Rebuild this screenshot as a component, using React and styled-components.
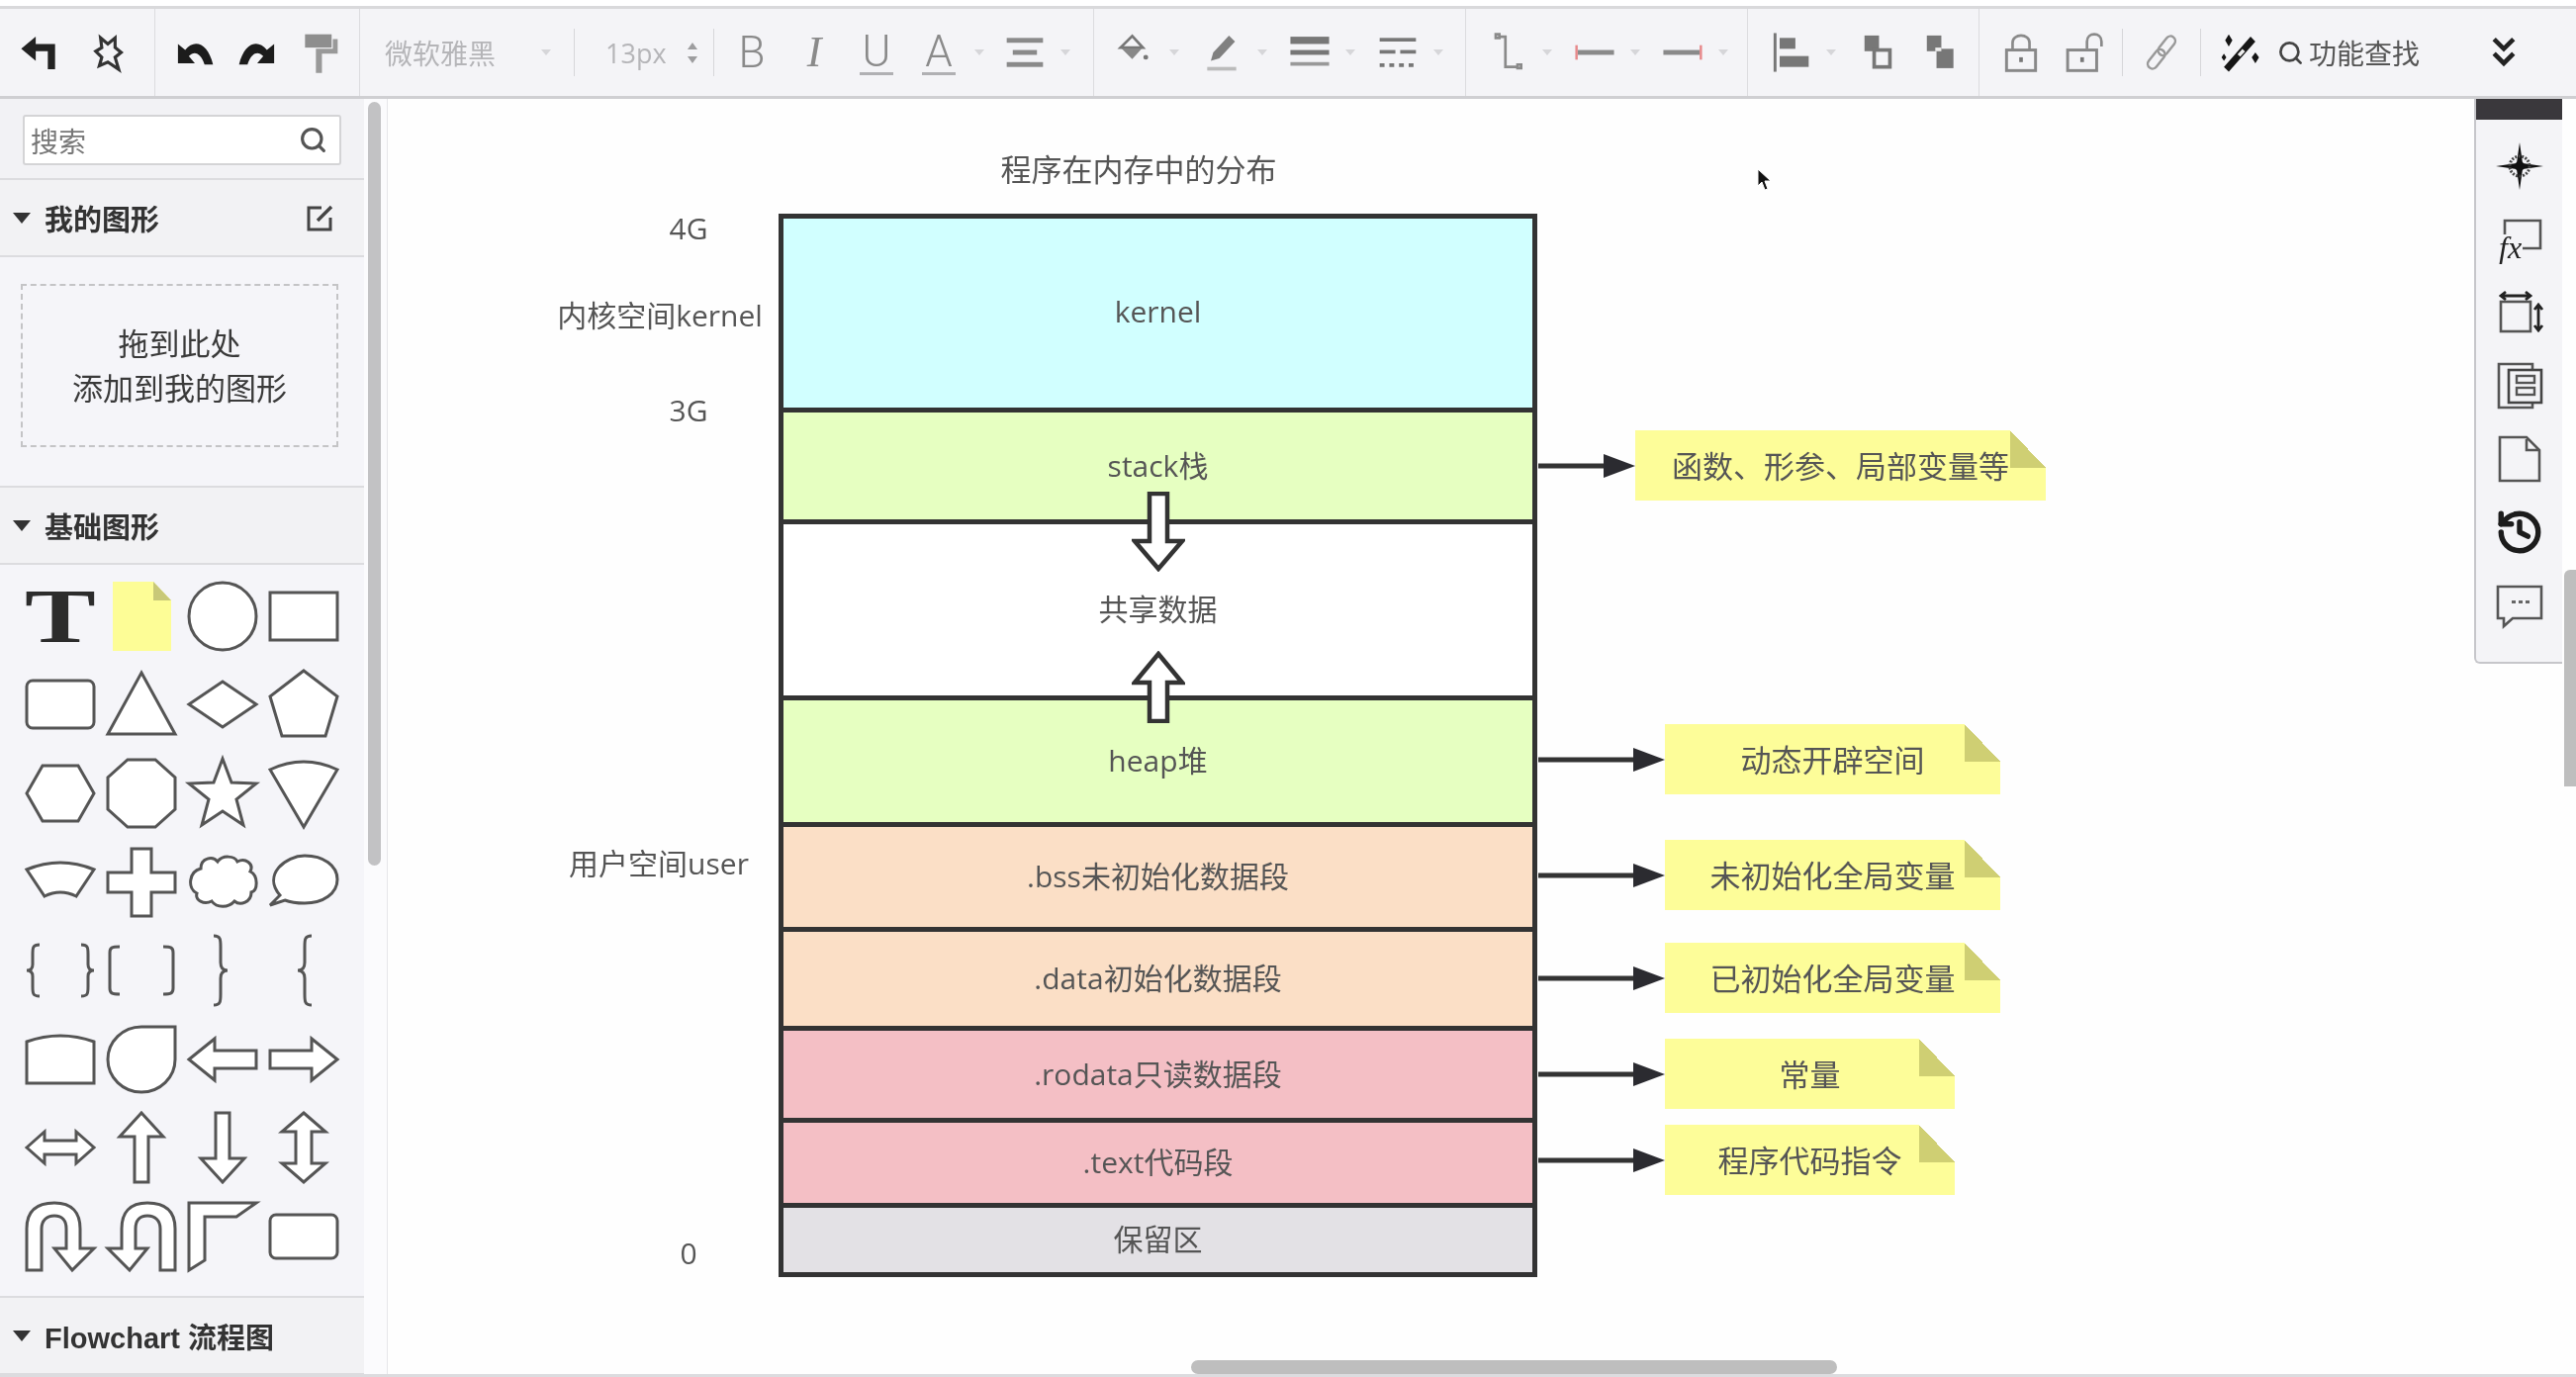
import {History, Search} from 'lucide-react';
import styled, {createGlobalStyle} from 'styled-components';

const FONT = `"Open Sans", "Noto Sans CJK SC", sans-serif`;

const GlobalStyle = createGlobalStyle`
  html, body {
    margin: 0;
    padding: 0;
    background: #fff;
  }
  * {
    box-sizing: border-box;
  }
`;

const Page = styled.div`
  width: 2604px;
  height: 1392px;
  padding-top: 6px;
  overflow: hidden;
  background: #fff;
  color: #555;
  font-family: ${FONT};
  filter: blur(0.7px);
`;

const ToolbarWrap = styled.header`
  display: flex;
  height: 94px;
  background: #f4f4f7;
  border-top: 3px solid #d9d9db;
  border-bottom: 3px solid #cfcfd2;
`;

const ToolGroup = styled.div`
  display: flex;
  flex: none;
  align-items: center;
  gap: ${props => props.$gap}px;
  width: ${props => props.$w}px;
  padding-left: ${props => props.$pad}px;
  border-right: 1px solid #dcdcdf;
`;

const LastGroup = styled.div`
  display: flex;
  flex: 1;
  align-items: center;
  gap: 19px;
  padding-left: 20px;
`;

const ToolSlot = styled.div`
  display: flex;
  flex: none;
  align-items: center;
`;

const ToolIcon = styled.div`
  display: flex;
  width: 44px;
  height: 50px;
  align-items: center;
  justify-content: center;
`;

const Caret = styled.span`
  flex: none;
  width: 0;
  height: 0;
  margin-left: 14px;
  border-left: 5px solid transparent;
  border-right: 5px solid transparent;
  border-top: 6px solid #d6d6d9;
`;

const Letter = styled.span`
  padding: 0 3px;
  color: #8a8a8a;
  font-family: ${props => (props.$italic ? '"Liberation Serif"' : 'Roboto')}, sans-serif;
  font-size: 44px;
  font-style: ${props => (props.$italic ? 'italic' : 'normal')};
  font-weight: 300;
  line-height: 42px;
  border-bottom: ${props => (props.$under ? '3px solid #b0b0b3' : '0')};
`;

const FontSelect = styled.div`
  display: flex;
  flex: none;
  width: 216px;
  align-items: center;
  justify-content: space-between;
  padding: 0 23px 0 25px;
  color: #b5b5b8;
  font-size: 28px;
`;

const Sep = styled.span`
  flex: none;
  width: 1px;
  height: 48px;
  background: #d6d6d9;
`;

const TightSep = styled(Sep)`
  margin: 0 -2px;
`;

const SizeField = styled.div`
  display: flex;
  flex: none;
  width: 140px;
  align-items: center;
  justify-content: space-between;
  padding: 0 16px 0 31px;
  color: #b5b5b8;
  font-family: "Open Sans", sans-serif;
  font-size: 27px;
`;

const Spinner = styled.span`
  display: flex;
  flex-direction: column;
  gap: 7px;
`;

const SpinUp = styled.i`
  border-left: 5px solid transparent;
  border-right: 5px solid transparent;
  border-bottom: 7px solid #9d9d9f;
`;

const SpinDown = styled.i`
  border-left: 5px solid transparent;
  border-right: 5px solid transparent;
  border-top: 7px solid #9d9d9f;
`;

const TextTools = styled.div`
  display: flex;
  gap: 19px;
  padding-left: 16px;
`;

const FindButton = styled.div`
  display: flex;
  align-items: center;
  gap: 5px;
  margin-left: -3px;
  color: #555;
  font-size: 28px;
  white-space: nowrap;
`;

const ChevronSlot = styled.div`
  display: flex;
  margin-left: auto;
  margin-right: 51px;
`;

const Body = styled.div`
  display: flex;
  height: 1292px;
  border-bottom: 3px solid #dcdcdf;
`;

const SidebarWrap = styled.aside`
  display: flex;
  flex: none;
  width: 392px;
`;

const SidebarPanel = styled.div`
  width: 368px;
  background: #f5f5f9;
`;

const SidebarTrack = styled.div`
  width: 24px;
  padding: 3px 6px 0 4px;
  background: #fbfbfd;
  border-right: 1px solid #e6e6e9;
`;

const SidebarThumb = styled.div`
  height: 772px;
  background: #c2c2c4;
  border-radius: 7px;
`;

const SearchArea = styled.div`
  height: 82px;
  padding: 16px 23px 0;
  background: #f2f2f5;
  border-bottom: 2px solid #dcdcdf;
`;

const SearchBox = styled.div`
  display: flex;
  width: 322px;
  height: 51px;
  align-items: center;
  justify-content: space-between;
  padding: 0 12px 0 6px;
  color: #777;
  font-size: 28px;
  background: #fff;
  border: 2px solid #d4d4d6;
  border-radius: 3px;
`;

const SectionHeader = styled.div`
  display: flex;
  height: 78px;
  align-items: center;
  gap: 14px;
  padding-left: 13px;
  color: #333;
  font-family: "Liberation Sans", "Noto Sans CJK SC", sans-serif;
  font-size: 29px;
  font-weight: 700;
  background: #f2f2f4;
  border-bottom: 2px solid #dcdcdf;
`;

const SectionCaret = styled.span`
  width: 0;
  height: 0;
  border-left: 9px solid transparent;
  border-right: 9px solid transparent;
  border-top: 11px solid #333;
`;

const EditIcon = styled.svg`
  margin-left: auto;
  margin-right: 30px;
`;

const DropArea = styled.div`
  height: 233px;
  padding: 27px 26px 0 21px;
  border-bottom: 2px solid #dcdcdf;
`;

const DropBox = styled.div`
  height: 165px;
  padding-top: 36px;
  color: #3a3a3a;
  font-size: 31px;
  line-height: 45px;
  text-align: center;
  border: 2px dashed #c4c4c6;
`;

const ShapeGrid = styled.div`
  display: grid;
  grid-template-columns: repeat(4, 82px);
  grid-auto-rows: 89.6px;
  height: 741px;
  padding: 7px 0 0 20px;
  border-bottom: 2px solid #dcdcdf;
`;

const ShapeCell = styled.div`
  display: flex;
  align-items: center;
  justify-content: center;
`;

const Shape = styled.svg`
  width: 72px;
  height: 76px;
  overflow: visible;
  fill: #fff;
  stroke: #555;
  stroke-width: 3;
`;

const Open = styled.path`
  fill: none;
`;

const TextTool = styled.span`
  color: #2c2c2c;
  font-family: "Liberation Serif", serif;
  font-size: 78px;
  font-weight: 700;
  line-height: 76px;
  transform: scaleX(1.38);
`;

const FxText = styled.text`
  fill: #222;
  font-family: "Liberation Serif", serif;
  font-size: 32px;
  font-style: italic;
`;

const Canvas = styled.main`
  position: relative;
  flex: 1;
  overflow: hidden;
  background: #fefefe;
`;

const DiagramTitle = styled.div`
  position: absolute;
  top: 48px;
  left: 759px;
  width: 0;
  display: flex;
  justify-content: center;
  font-size: 31px;
  line-height: 46px;
  white-space: nowrap;
`;

const AxisLabel = styled.div`
  position: absolute;
  top: ${props => props.$y}px;
  left: ${props => props.$x}px;
  font-size: 30px;
  line-height: 0;
  white-space: nowrap;
  transform: translateX(-50%);
`;

const MemoryStack = styled.div`
  position: absolute;
  top: 116px;
  left: 395px;
  width: 767px;
  border: 5px solid #333;
  border-bottom: 0;
`;

const MemoryRow = styled.div`
  display: flex;
  height: ${props => props.$h}px;
  align-items: center;
  justify-content: center;
  padding-bottom: 5px;
  font-size: 30px;
  background: ${props => props.$bg};
  border-bottom: 5px solid #333;
`;

const BlockArrow = styled.svg`
  position: absolute;
  top: ${props => props.$top}px;
  left: 752px;
`;

const Callout = styled.div`
  position: absolute;
  top: ${props => props.$top}px;
  left: 1163px;
  display: flex;
  height: 71px;
  align-items: center;
`;

const Note = styled.div`
  position: relative;
  display: flex;
  width: ${props => props.$w}px;
  height: 71px;
  align-items: center;
  justify-content: center;
  padding-bottom: 2px;
  font-size: 31px;
  background: #fdfd99;
  &::after {
    content: '';
    position: absolute;
    top: 0;
    right: 0;
    width: 36px;
    height: 38px;
    background: linear-gradient(to top right, #cfcf73 50%, #fefefe 50%);
  }
`;

const Cursor = styled.svg`
  position: absolute;
  top: 70px;
  left: 1384px;
`;

const RightPanel = styled.div`
  position: absolute;
  top: 0;
  left: 2109px;
  width: 89px;
  height: 571px;
  background: #f4f4f7;
  border-left: 2px solid #c6c6ca;
  border-bottom: 2px solid #c6c6ca;
  border-bottom-left-radius: 6px;
`;

const PanelHead = styled.div`
  height: 21px;
  background: #3a383c;
`;

const PanelIcons = styled.div`
  display: flex;
  flex-direction: column;
  align-items: center;
  gap: 24px;
  padding-top: 22px;
`;

const VScrollThumb = styled.div`
  position: absolute;
  top: 476px;
  right: 0;
  width: 12px;
  height: 219px;
  background: #bebebe;
  border-top-left-radius: 6px;
`;

const HScrollThumb = styled.div`
  position: absolute;
  bottom: 0;
  left: 812px;
  width: 653px;
  height: 14px;
  background: #bebebe;
  border-radius: 7px;
`;

const ROWS = [
  {h: 196, bg: '#d1ffff', label: 'kernel'},
  {h: 113, bg: '#e6ffc1', label: 'stack栈'},
  {h: 178, bg: '#ffffff', label: '共享数据'},
  {h: 128, bg: '#e6ffc1', label: 'heap堆'},
  {h: 106, bg: '#fbdfc6', label: '.bss未初始化数据段'},
  {h: 100, bg: '#fbdfc6', label: '.data初始化数据段'},
  {h: 93, bg: '#f4bfc5', label: '.rodata只读数据段'},
  {h: 86, bg: '#f4bfc5', label: '.text代码段'},
  {h: 70, bg: '#e3e1e5', label: '保留区'},
];

const CALLOUTS = [
  {top: 335, arrow: 98, w: 415, text: '函数、形参、局部变量等'},
  {top: 632, arrow: 128, w: 339, text: '动态开辟空间'},
  {top: 749, arrow: 128, w: 339, text: '未初始化全局变量'},
  {top: 853, arrow: 128, w: 339, text: '已初始化全局变量'},
  {top: 950, arrow: 128, w: 293, text: '常量'},
  {top: 1037, arrow: 128, w: 293, text: '程序代码指令'},
];

const AXIS = [
  {x: 304, y: 131, text: '4G'},
  {x: 275, y: 219, text: '内核空间kernel'},
  {x: 304, y: 315, text: '3G'},
  {x: 274, y: 773, text: '用户空间user'},
  {x: 304, y: 1167, text: '0'},
];

const Icon = ({children, w = 44, h = 44, box = '0 0 36 36'}) => (
  <svg width={w} height={h} viewBox={box}>
    {children}
  </svg>
);

const TOOL = {
  back: <path d="M2 15 L14 5 V11 H30 V32 H24 V17 H14 V25 Z" fill="#222" />,
  pin: <path d="M12 6 L18 11 L24 6 L24 14 L29 18 L24 22 L27 32 L18 26 L11 29 L13 22 L8 17 L13 14 Z" fill="none" stroke="#333" strokeWidth="2.6" />,
  undo: <path d="M4 11 V27 H18 L13 21 C18 16 23 19 26 28 L33 28 C29 11 18 6 10 16 Z" fill="#1c1c1c" />,
  redo: <path d="M32 11 V27 H18 L23 21 C18 16 13 19 10 28 L3 28 C7 11 18 6 26 16 Z" fill="#1c1c1c" />,
  paint: (
    <>
      <rect x="6" y="3" width="22" height="11" fill="#8e8e8e" />
      <path d="M28 7 H33 V19 H20 V35 H15 V15 H29 V7 Z" fill="#999" />
    </>
  ),
  align: (
    <g fill="#8a8a8a">
      <rect x="3" y="6" width="30" height="4" />
      <rect x="8" y="16" width="20" height="4" />
      <rect x="3" y="26" width="30" height="4" />
    </g>
  ),
  fill: (
    <g transform="translate(4 2) scale(0.8)">
      <path d="M16 3 L27 15 H4 Z" fill="none" stroke="#777" strokeWidth="2.8" />
      <path d="M5 16 H26 L16 27 Z" fill="#888" />
      <circle cx="30" cy="25" r="2.5" fill="#777" />
    </g>
  ),
  pen: (
    <>
      <path d="M9 25 L11 18 L24 4 L29 9 L16 23 Z" fill="#808080" />
      <rect x="6" y="30" width="24" height="3" fill="#bbb" />
    </>
  ),
  lines: (
    <g fill="#777">
      <rect x="2" y="5" width="32" height="6" />
      <rect x="2" y="16" width="32" height="4" />
      <rect x="2" y="26" width="32" height="3" fill="#999" />
    </g>
  ),
  dash: (
    <g fill="#777">
      <rect x="3" y="6" width="30" height="3" />
      <rect x="3" y="16" width="13" height="3" />
      <rect x="20" y="16" width="13" height="3" />
      <path d="M3 27 h4 v3 h-4z M11 27 h4 v3 h-4z M19 27 h4 v3 h-4z M27 27 h4 v3 h-4z" />
    </g>
  ),
  connector: <path d="M11 5 H17 V30 H27 M9 3 h3 v3 h-3z M27 28 h3 v3 h-3z" fill="none" stroke="#8a8a8a" strokeWidth="2.2" />,
  lineLeft: (
    <>
      <rect x="4" y="16" width="30" height="4" fill="#8a8a8a" />
      <rect x="2" y="12" width="2" height="12" fill="#e7898b" />
    </>
  ),
  lineRight: (
    <>
      <rect x="2" y="16" width="30" height="4" fill="#8a8a8a" />
      <rect x="32" y="12" width="2" height="12" fill="#e7898b" />
    </>
  ),
  alignLeft: (
    <g fill="#777">
      <rect x="4" y="2" width="2.4" height="32" />
      <rect x="9" y="6" width="13" height="9" />
      <rect x="9" y="21" width="24" height="9" />
    </g>
  ),
  front: (
    <>
      <rect x="8" y="4" width="12" height="13" fill="#777" />
      <rect x="16" y="16" width="13" height="14" fill="none" stroke="#777" strokeWidth="3" />
    </>
  ),
  backward: (
    <>
      <rect x="8" y="4" width="12" height="13" fill="#777" />
      <rect x="16" y="15" width="14" height="16" fill="#777" />
      <rect x="15" y="14" width="5" height="3" fill="#eee" />
    </>
  ),
  lock: (
    <>
      <path d="M11 16 V10 C11 2 25 2 25 10 V16" fill="none" stroke="#8a8a8a" strokeWidth="2.2" />
      <rect x="6" y="16" width="24" height="17" fill="none" stroke="#888" strokeWidth="2.4" />
      <rect x="16.5" y="22" width="3" height="4" fill="#777" />
    </>
  ),
  unlock: (
    <>
      <path d="M21 15 V9 C21 1 33 1 33 9 V13" fill="none" stroke="#8a8a8a" strokeWidth="2.2" />
      <rect x="5" y="16" width="24" height="17" fill="none" stroke="#888" strokeWidth="2.4" />
      <rect x="15.5" y="22" width="3" height="4" fill="#777" />
    </>
  ),
  link: (
    <g fill="none" stroke="#999" strokeWidth="2" transform="rotate(-52 18 18)">
      <rect x="2" y="14" width="18" height="8" rx="4" />
      <rect x="16" y="14" width="18" height="8" rx="4" />
    </g>
  ),
  wand: (
    <>
      <path d="M5 30 L27 5 L31 9 L9 34 Z" fill="#151515" />
      <rect x="16" y="17" width="6" height="3" fill="#eee" transform="rotate(-48 19 18)" />
      <path d="M9 3 L12 8 L9 13 L6 8 Z M31 18 L34 22 L31 27 L28 22 Z M5 19 L7 22 L5 25 L3 22 Z" fill="#151515" />
    </>
  ),
  chevrons: <path d="M10 7 L18 15 L26 7 M10 19 L18 27 L26 19" fill="none" stroke="#222" strokeWidth="3.8" />,
};

const PANEL_ICONS = [
  <Icon key="nav" w={50} h={50} box="0 0 50 50">
    <path d="M25 1 L28 22 L49 25 L28 28 L25 49 L22 28 L1 25 L22 22 Z" fill="#111" />
    <circle cx="25" cy="25" r="10" fill="none" stroke="#444" strokeWidth="3" strokeDasharray="2 1.5" />
    <circle cx="25" cy="25" r="5" fill="#111" />
  </Icon>,
  <Icon key="fx" w={50} h={50} box="0 0 50 50">
    <path d="M10 20 V6 H46 V34 H28" fill="none" stroke="#555" strokeWidth="2.6" />
    <FxText x="4" y="44">fx</FxText>
  </Icon>,
  <Icon key="size" w={50} h={50} box="0 0 50 50">
    <rect x="6" y="14" width="30" height="30" fill="none" stroke="#555" strokeWidth="2.6" />
    <path d="M7 8 H35 M11 4 L6 8 L11 12 M31 4 L36 8 L31 12 M44 18 V42 M40 22 L44 17 L48 22 M40 38 L44 43 L48 38" fill="none" stroke="#222" strokeWidth="2.8" />
  </Icon>,
  <Icon key="pages" w={50} h={50} box="0 0 50 50">
    <path d="M38 8 V3 H4 V47 H38 V43" fill="none" stroke="#555" strokeWidth="2.6" />
    <rect x="14" y="9" width="33" height="33" fill="none" stroke="#444" strokeWidth="2.6" />
    <rect x="22" y="15" width="18" height="7" fill="none" stroke="#555" strokeWidth="2.4" />
    <rect x="22" y="27" width="18" height="7" fill="none" stroke="#555" strokeWidth="2.4" />
  </Icon>,
  <Icon key="page" w={50} h={50} box="0 0 50 50">
    <path d="M5 3 H32 L45 16 V47 H5 Z M32 5 V16 H44" fill="none" stroke="#555" strokeWidth="2.6" />
  </Icon>,
  <History key="history" size={50} color="#1c1c1c" strokeWidth={2.6} />,
  <Icon key="comment" w={50} h={50} box="0 0 50 50">
    <path d="M3 6 H47 V38 H18 L9 46 V38 H3 Z" fill="none" stroke="#555" strokeWidth="2.6" />
    <path d="M17 20 h4 v3 h-4z M24 20 h4 v3 h-4z M31 20 h4 v3 h-4z" fill="#666" />
  </Icon>,
];

const SHAPES = [
  <TextTool key="t">T</TextTool>,
  <Shape key="note" viewBox="0 0 72 76">
    <polygon points="7,3 48,3 66,22 66,73 7,73" fill="#fdfd96" stroke="none" />
    <polygon points="48,3 66,22 48,22" fill="#c8c878" stroke="none" />
  </Shape>,
  <Shape key="circle" viewBox="0 0 72 76"><ellipse cx="36" cy="38" rx="34" ry="34" /></Shape>,
  <Shape key="rect" viewBox="0 0 72 76"><rect x="2" y="14" width="68" height="48" /></Shape>,
  <Shape key="round" viewBox="0 0 72 76"><rect x="2" y="14" width="68" height="48" rx="6" /></Shape>,
  <Shape key="tri" viewBox="0 0 72 76"><polygon points="36,6 70,68 2,68" /></Shape>,
  <Shape key="rhomb" viewBox="0 0 72 76"><polygon points="36,15 70,38 36,61 2,38" /></Shape>,
  <Shape key="penta" viewBox="0 0 72 76"><polygon points="36,4 70,30 58,70 14,70 2,30" /></Shape>,
  <Shape key="hexa" viewBox="0 0 72 76"><polygon points="18,10 54,10 70,38 54,66 18,66 2,38" /></Shape>,
  <Shape key="octa" viewBox="0 0 72 76"><polygon points="22,4 50,4 70,22 70,54 50,72 22,72 2,54 2,22" /></Shape>,
  <Shape key="star" viewBox="0 0 72 76"><polygon points="36,3 45,27 70,28 50,44 57,70 36,56 15,70 22,44 2,28 27,27" /></Shape>,
  <Shape key="sector" viewBox="0 0 72 76"><path d="M2 14 Q36 -2 70 14 L36 72 Z" /></Shape>,
  <Shape key="arc" viewBox="0 0 72 76"><path d="M2 25 Q36 11 70 25 L52 52 Q36 44 20 52 Z" /></Shape>,
  <Shape key="plus" viewBox="0 0 72 76"><polygon points="26,4 46,4 46,28 70,28 70,48 46,48 46,72 26,72 26,48 2,48 2,28 26,28" /></Shape>,
  <Shape key="cloud" viewBox="0 0 72 76">
    <path d="M14 24 C14 13 26 11 31 17 C36 10 48 11 51 17 C59 13 68 19 64 27 C72 31 72 46 65 48 C65 58 54 62 48 57 C42 64 30 64 25 57 C17 61 8 56 10 49 C0 44 2 27 14 24 Z" />
  </Shape>,
  <Shape key="speech" viewBox="0 0 72 76">
    <path d="M12 51 C-6 30 18 11 37 11 C56 11 70 21 70 35 C70 49 56 59 37 59 C28 59 22 58 17 56 L2 61 Z" />
  </Shape>,
  <Shape key="braces" viewBox="0 0 72 76">
    <Open d="M15 12 C8 12 8 15 8 22 V32 C8 36 6 38 2 38 C6 38 8 40 8 44 V54 C8 61 8 64 15 64" />
    <Open d="M57 12 C64 12 64 15 64 22 V32 C64 36 66 38 70 38 C66 38 64 40 64 44 V54 C64 61 64 64 57 64" />
  </Shape>,
  <Shape key="brackets" viewBox="0 0 72 76">
    <Open d="M14 14 C6 14 4 15 4 20 V56 C4 61 6 62 14 62" />
    <Open d="M58 14 C66 14 68 15 68 20 V56 C68 61 66 62 58 62" />
  </Shape>,
  <Shape key="rbrace" viewBox="0 0 72 76">
    <Open d="M27 3 C34 3 34 7 34 14 V30 C34 35 36 38 41 38 C36 38 34 41 34 46 V62 C34 69 34 73 27 73" />
  </Shape>,
  <Shape key="lbrace" viewBox="0 0 72 76">
    <Open d="M44 3 C37 3 37 7 37 14 V30 C37 35 35 38 30 38 C35 38 37 41 37 46 V62 C37 69 37 73 44 73" />
  </Shape>,
  <Shape key="top-arc" viewBox="0 0 72 76"><path d="M2 20 Q36 8 70 20 V62 H2 Z" /></Shape>,
  <Shape key="drop" viewBox="0 0 72 76"><path d="M36 5 H70 V38 A34 33 0 0 1 2 38 A34 33 0 0 1 36 5 Z" /></Shape>,
  <Shape key="left" viewBox="0 0 72 76"><path d="M2 38 L28 17 V29 H70 V47 H28 V59 Z" /></Shape>,
  <Shape key="right" viewBox="0 0 72 76"><path d="M70 38 L44 17 V29 H2 V47 H44 V59 Z" /></Shape>,
  <Shape key="both" viewBox="0 0 72 76"><path d="M2 38 L20 22 V31 H52 V22 L70 38 L52 54 V45 H20 V54 Z" /></Shape>,
  <Shape key="up" viewBox="0 0 72 76"><path d="M36 3 L58 27 H43 V73 H29 V27 H14 Z" /></Shape>,
  <Shape key="down" viewBox="0 0 72 76"><path d="M29 3 H43 V49 H58 L36 73 L14 49 H29 Z" /></Shape>,
  <Shape key="updown" viewBox="0 0 72 76"><path d="M36 3 L58 22 H44 V54 H58 L36 73 L14 54 H28 V22 H14 Z" /></Shape>,
  <Shape key="uturn" viewBox="0 0 72 76">
    <path d="M2 72 V30 C2 10 15 4 30 4 C48 4 56 14 56 30 V50 H70 L48 72 L30 50 H42 V30 C42 22 38 17 30 17 C22 17 17 22 17 30 V72 Z" />
  </Shape>,
  <Shape key="uturn-left" viewBox="0 0 72 76">
    <path d="M70 72 V30 C70 10 57 4 42 4 C24 4 16 14 16 30 V50 H2 L24 72 L42 50 H30 V30 C30 22 34 17 42 17 C50 17 55 22 55 30 V72 Z" />
  </Shape>,
  <Shape key="corner" viewBox="0 0 72 76"><path d="M2 4 H70 L50 18 H18 V62 L2 72 Z" /></Shape>,
  <Shape key="round2" viewBox="0 0 72 76"><rect x="2" y="16" width="68" height="44" rx="6" /></Shape>,
];

function Tool({name, caret}) {
  return (
    <ToolSlot>
      <ToolIcon>
        <Icon>{TOOL[name]}</Icon>
      </ToolIcon>
      {caret && <Caret />}
    </ToolSlot>
  );
}

function LetterTool({children, italic, under, caret}) {
  return (
    <ToolSlot>
      <ToolIcon>
        <Letter $italic={italic} $under={under}>
          {children}
        </Letter>
      </ToolIcon>
      {caret && <Caret />}
    </ToolSlot>
  );
}

function Toolbar() {
  return (
    <ToolbarWrap>
      <ToolGroup $w={157} $pad={19} $gap={24}>
        <Tool name="back" />
        <Tool name="pin" />
      </ToolGroup>
      <ToolGroup $w={207} $pad={18} $gap={19}>
        <Tool name="undo" />
        <Tool name="redo" />
        <Tool name="paint" />
      </ToolGroup>
      <ToolGroup $w={742} $pad={0} $gap={0}>
        <FontSelect>
          微软雅黑
          <Caret />
        </FontSelect>
        <Sep />
        <SizeField>
          13px
          <Spinner>
            <SpinUp />
            <SpinDown />
          </Spinner>
        </SizeField>
        <Sep />
        <TextTools>
          <LetterTool>B</LetterTool>
          <LetterTool italic>I</LetterTool>
          <LetterTool under>U</LetterTool>
          <LetterTool under caret>A</LetterTool>
          <Tool name="align" caret />
        </TextTools>
      </ToolGroup>
      <ToolGroup $w={376} $pad={18} $gap={21}>
        <Tool name="fill" caret />
        <Tool name="pen" caret />
        <Tool name="lines" caret />
        <Tool name="dash" caret />
      </ToolGroup>
      <ToolGroup $w={285} $pad={19} $gap={21}>
        <Tool name="connector" caret />
        <Tool name="lineLeft" caret />
        <Tool name="lineRight" caret />
      </ToolGroup>
      <ToolGroup $w={234} $pad={21} $gap={19}>
        <Tool name="alignLeft" caret />
        <Tool name="front" />
        <Tool name="backward" />
      </ToolGroup>
      <LastGroup>
        <Tool name="lock" />
        <Tool name="unlock" />
        <TightSep />
        <Tool name="link" />
        <TightSep />
        <Tool name="wand" />
        <FindButton>
          <Search size={27} color="#444" strokeWidth={2.4} />
          功能查找
        </FindButton>
        <ChevronSlot>
          <Icon>{TOOL.chevrons}</Icon>
        </ChevronSlot>
      </LastGroup>
    </ToolbarWrap>
  );
}

function Sidebar() {
  return (
    <SidebarWrap>
      <SidebarPanel>
        <SearchArea>
          <SearchBox>
            搜索
            <Search size={29} color="#555" strokeWidth={2.6} />
          </SearchBox>
        </SearchArea>
        <SectionHeader>
          <SectionCaret />
          我的图形
          <EditIcon viewBox="0 0 28 28" width="28" height="28">
            <path d="M24 14 V26 H2 V4 H15" fill="none" stroke="#444" strokeWidth="3" />
            <path d="M11 17 L25 3" fill="none" stroke="#444" strokeWidth="3.4" />
          </EditIcon>
        </SectionHeader>
        <DropArea>
          <DropBox>
            拖到此处
            <br />
            添加到我的图形
          </DropBox>
        </DropArea>
        <SectionHeader>
          <SectionCaret />
          基础图形
        </SectionHeader>
        <ShapeGrid>
          {SHAPES.map(shape => (
            <ShapeCell key={shape.key}>{shape}</ShapeCell>
          ))}
        </ShapeGrid>
        <SectionHeader>
          <SectionCaret />
          Flowchart 流程图
        </SectionHeader>
      </SidebarPanel>
      <SidebarTrack>
        <SidebarThumb />
      </SidebarTrack>
    </SidebarWrap>
  );
}

function Diagram() {
  return (
    <>
      <DiagramTitle>程序在内存中的分布</DiagramTitle>
      {AXIS.map(item => (
        <AxisLabel key={item.text} $x={item.x} $y={item.y}>
          {item.text}
        </AxisLabel>
      ))}
      <MemoryStack>
        {ROWS.map(row => (
          <MemoryRow key={row.label} $h={row.h} $bg={row.bg}>
            {row.label}
          </MemoryRow>
        ))}
      </MemoryStack>
      <BlockArrow $top={397} viewBox="0 0 54 81" width="54" height="81">
        <path d="M18 2 H36 V50 H51 L27 78 L3 50 H18 Z" fill="#fff" stroke="#333" strokeWidth="4.5" />
      </BlockArrow>
      <BlockArrow $top={558} viewBox="0 0 54 73" width="54" height="73">
        <path d="M27 3 L51 32 H36 V71 H18 V32 H3 Z" fill="#fff" stroke="#333" strokeWidth="4.5" />
      </BlockArrow>
      {CALLOUTS.map(item => (
        <Callout key={item.text} $top={item.top}>
          <svg width={item.arrow} height="26" viewBox={`0 0 ${item.arrow} 26`}>
            <rect x="0" y="10.5" width={item.arrow - 20} height="5" fill="#333" />
            <polygon points={`${item.arrow - 32},1 ${item.arrow},13 ${item.arrow - 32},25`} fill="#2b2b30" />
          </svg>
          <Note $w={item.w}>{item.text}</Note>
        </Callout>
      ))}
    </>
  );
}

export default function App() {
  return (
    <>
      <GlobalStyle />
      <Page>
        <Toolbar />
        <Body>
          <Sidebar />
          <Canvas>
            <Diagram />
            <Cursor viewBox="0 0 16 24" width="16" height="24">
              <path d="M1 1 V18 L5 14 L8 22 L11 21 L8 13 L14 13 Z" fill="#111" stroke="#fff" strokeWidth="1" />
            </Cursor>
            <RightPanel>
              <PanelHead />
              <PanelIcons>{PANEL_ICONS}</PanelIcons>
            </RightPanel>
            <VScrollThumb />
            <HScrollThumb />
          </Canvas>
        </Body>
      </Page>
    </>
  );
}
